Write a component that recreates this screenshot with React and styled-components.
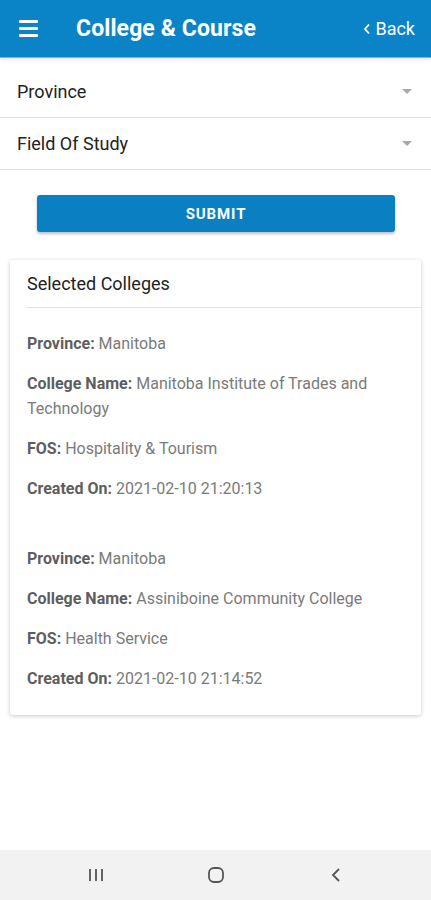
import React from 'react';
import styled, { createGlobalStyle } from 'styled-components';

const GlobalStyle = createGlobalStyle`
  html, body {
    margin: 0;
    padding: 0;
    background: #ffffff;
    font-family: Roboto, 'Liberation Sans', sans-serif;
  }
  * { box-sizing: border-box; }
`;

const Screen = styled.div`
  display: flex;
  flex-direction: column;
  min-height: 100vh;
  width: 431px;
`;

const TopBar = styled.header`
  height: 58px;
  background: #0a84c6;
  border-bottom: 1px solid #6fb8e0;
  display: flex;
  align-items: center;
  padding: 0 16px 0 19px;
  color: #ffffff;
  box-shadow: 0 1px 3px rgba(0, 0, 0, 0.12);
`;

const Burger = styled.div`
  width: 19px;
  display: flex;
  flex-direction: column;
  gap: 4px;

  span {
    height: 3px;
    background: #ffffff;
    border-radius: 1px;
  }
`;

const Title = styled.h1`
  margin: 0 0 0 38px;
  flex: 1;
  font-size: 23px;
  font-weight: 700;
  letter-spacing: 0.1px;
`;

const BackLink = styled.a`
  display: flex;
  align-items: center;
  gap: 4px;
  font-size: 18px;
  color: #ffffff;
`;

const Main = styled.main`
  flex: 1;
  padding-top: 8px;
`;

const SelectRow = styled.div`
  height: 52px;
  border-bottom: 1px solid #e2e2e2;
  display: flex;
  align-items: center;
  justify-content: space-between;
  padding: 0 19px 0 17px;
  font-size: 18px;
  color: #222222;
`;

const Caret = styled.span`
  width: 0;
  height: 0;
  border-left: 5px solid transparent;
  border-right: 5px solid transparent;
  border-top: 5px solid #a8a8a8;
`;

const ButtonWrap = styled.div`
  display: flex;
  justify-content: center;
  padding: 25px 0 28px;
`;

const SubmitButton = styled.button`
  width: 358px;
  height: 37px;
  margin-left: 1px;
  border: none;
  border-radius: 3px;
  background: #0a80c3;
  color: #ffffff;
  font-family: Roboto, 'Liberation Sans', sans-serif;
  font-size: 15px;
  font-weight: 700;
  letter-spacing: 0.9px;
  box-shadow: 0 2px 3px rgba(0, 0, 0, 0.25);
`;

const Card = styled.section`
  margin: 0 10px;
  background: #ffffff;
  border-radius: 3px;
  box-shadow: 0 1px 4px rgba(0, 0, 0, 0.22);
  padding-bottom: 24px;
`;

const CardHeader = styled.div`
  height: 48px;
  margin-left: 17px;
  border-bottom: 1px solid #e0e0e0;
  display: flex;
  align-items: center;
  font-size: 18px;
  color: #222222;
`;

const Entries = styled.div`
  padding: 23px 17px 0;
  display: flex;
  flex-direction: column;
  gap: 45px;
`;

const Entry = styled.div`
  display: flex;
  flex-direction: column;
  gap: 15px;
`;

const Line = styled.p`
  margin: 0;
  font-size: 16px;
  line-height: 25px;
  color: #7a7a7a;

  b {
    color: #5e5e5e;
    font-weight: 700;
  }
`;

const NavBar = styled.nav`
  height: 50px;
  background: #f2f2f2;
  display: grid;
  grid-template-columns: repeat(3, 120px);
  justify-content: center;
  align-items: center;
  justify-items: center;
  color: #555555;
`;

const colleges = [
  {
    province: 'Manitoba',
    name: 'Manitoba Institute of Trades and Technology',
    fos: 'Hospitality & Tourism',
    created: '2021-02-10 21:20:13',
  },
  {
    province: 'Manitoba',
    name: 'Assiniboine Community College',
    fos: 'Health Service',
    created: '2021-02-10 21:14:52',
  },
];

export default function App() {
  return (
    <Screen>
      <GlobalStyle />
      <TopBar>
        <Burger>
          <span />
          <span />
          <span />
        </Burger>
        <Title>College &amp; Course</Title>
        <BackLink>
          <svg width="8" height="12" viewBox="0 0 8 12">
            <path d="M6 1.5 L2 6 L6 10.5" fill="none" stroke="#fff" strokeWidth="1.8" />
          </svg>
          Back
        </BackLink>
      </TopBar>

      <Main>
        <SelectRow>
          Province
          <Caret />
        </SelectRow>
        <SelectRow>
          Field Of Study
          <Caret />
        </SelectRow>

        <ButtonWrap>
          <SubmitButton>SUBMIT</SubmitButton>
        </ButtonWrap>

        <Card>
          <CardHeader>Selected Colleges</CardHeader>
          <Entries>
            {colleges.map((c, i) => (
              <Entry key={i}>
                <Line><b>Province:</b> {c.province}</Line>
                <Line><b>College Name:</b> {c.name}</Line>
                <Line><b>FOS:</b> {c.fos}</Line>
                <Line><b>Created On:</b> {c.created}</Line>
              </Entry>
            ))}
          </Entries>
        </Card>
      </Main>

      <NavBar>
        <svg width="18" height="16" viewBox="0 0 18 16">
          <path d="M3 2 V14 M9 2 V14 M15 2 V14" stroke="#555" strokeWidth="1.8" />
        </svg>
        <svg width="18" height="18" viewBox="0 0 18 18">
          <rect x="2" y="2" width="14" height="14" rx="5" fill="none" stroke="#555" strokeWidth="1.8" />
        </svg>
        <svg width="12" height="16" viewBox="0 0 12 16">
          <path d="M9 2 L3 8 L9 14" fill="none" stroke="#555" strokeWidth="1.8" />
        </svg>
      </NavBar>
    </Screen>
  );
}
